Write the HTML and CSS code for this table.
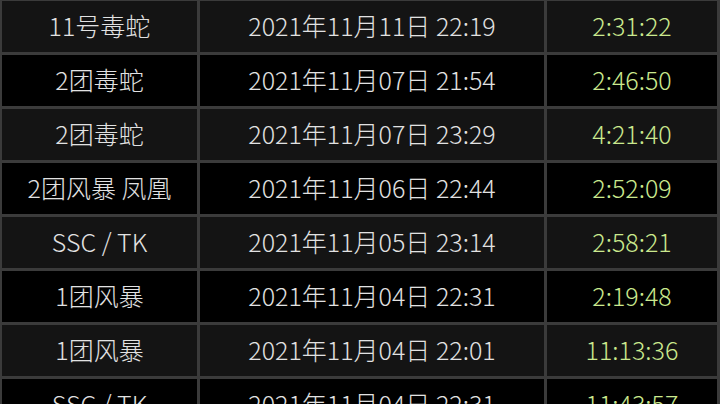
FILE: index.html
```html
<!DOCTYPE html>
<html lang="zh">
<head>
<meta charset="utf-8">
<link rel="stylesheet" href="styles.css">
</head>
<body>
<div class="table">
  <div class="row dark"><div class="cell">11号毒蛇</div><div class="cell">2021年11月11日 22:19</div><div class="cell time">2:31:22</div></div>
  <div class="row"><div class="cell">2团毒蛇</div><div class="cell">2021年11月07日 21:54</div><div class="cell time">2:46:50</div></div>
  <div class="row dark"><div class="cell">2团毒蛇</div><div class="cell">2021年11月07日 23:29</div><div class="cell time">4:21:40</div></div>
  <div class="row"><div class="cell">2团风暴 凤凰</div><div class="cell">2021年11月06日 22:44</div><div class="cell time">2:52:09</div></div>
  <div class="row dark"><div class="cell">SSC / TK</div><div class="cell">2021年11月05日 23:14</div><div class="cell time">2:58:21</div></div>
  <div class="row"><div class="cell">1团风暴</div><div class="cell">2021年11月04日 22:31</div><div class="cell time">2:19:48</div></div>
  <div class="row dark"><div class="cell">1团风暴</div><div class="cell">2021年11月04日 22:01</div><div class="cell time">11:13:36</div></div>
  <div class="row"><div class="cell">SSC / TK</div><div class="cell">2021年11月04日 22:31</div><div class="cell time">11:43:57</div></div>
</div>
</body>
</html>
```
FILE: styles.css
```css
html, body {
  margin: 0;
  padding: 0;
  width: 720px;
  height: 404px;
  overflow: hidden;
  background: #3b3b3b;
}
.table {
  display: grid;
  grid-template-columns: 195px 344px 170px;
  grid-auto-rows: 51px;
  gap: 3px;
  padding: 3px;
  margin: -2px 0 0 -1px;
  width: max-content;
  background: #3b3b3b;
  font-family: "Noto Sans CJK SC", "Noto Sans", sans-serif;
  font-size: 25px;
  font-weight: 300;
  color: #e2e2e2;
}
.row {
  display: contents;
}
.cell {
  display: flex;
  align-items: center;
  justify-content: center;
  padding-bottom: 4px;
  background: #000;
  white-space: nowrap;
}
.row.dark .cell {
  background: #141414;
}
.cell.time {
  color: #cbe98e;
}
```
